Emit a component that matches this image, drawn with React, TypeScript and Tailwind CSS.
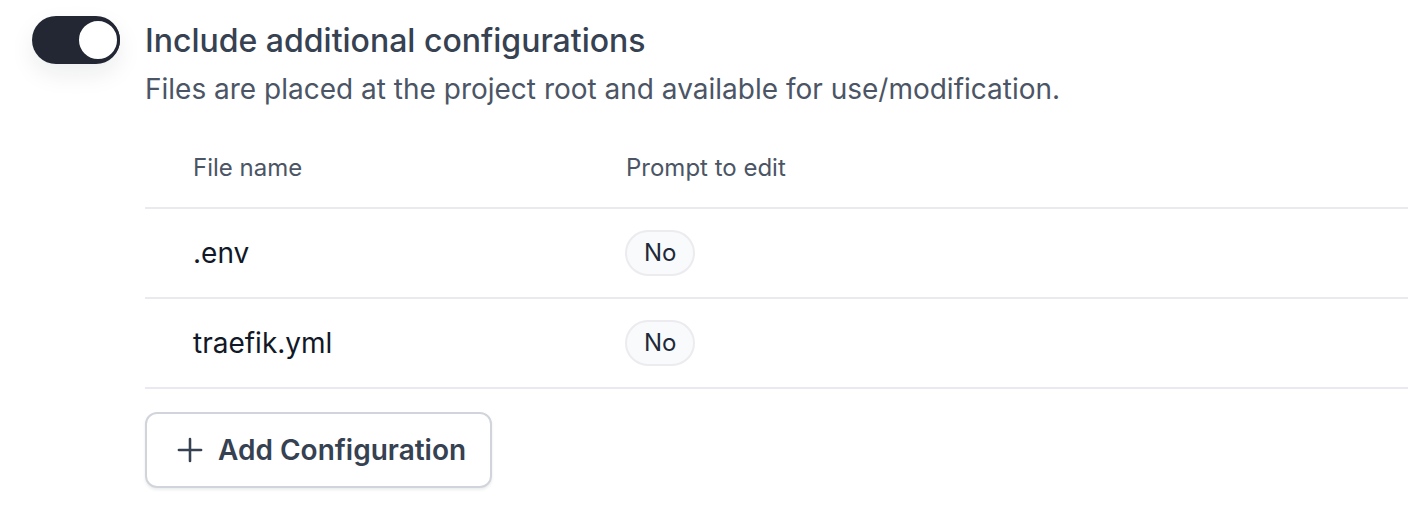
import React from 'react';

type ConfigRow = { name: string; prompt: boolean };

const rows: ConfigRow[] = [
  { name: '.env', prompt: false },
  { name: 'traefik.yml', prompt: false },
];

function Toggle({ on }: { on: boolean }) {
  return (
    <button
      type="button"
      className={
        on
          ? 'relative flex h-[48px] w-[88px] flex-none items-center justify-end rounded-full bg-[#222733] shadow-[0_10px_24px_rgba(15,23,42,0.08)]'
          : 'relative flex h-[48px] w-[88px] flex-none items-center justify-start rounded-full bg-[#e5e7eb]'
      }
    >
      <span className="h-[44px] w-[44px] rounded-full border-[3px] border-[#222733] bg-white" />
    </button>
  );
}

function PlusIcon() {
  return (
    <svg width="28" height="28" viewBox="0 0 24 24" fill="none" stroke="currentColor" strokeWidth="2.2" strokeLinecap="round">
      <path d="M12 2.5v19" />
      <path d="M2.5 12h19" />
    </svg>
  );
}

export default function App() {
  return (
    <div className="min-h-[512px] bg-white font-['Inter',sans-serif]">
      <div className="flex items-start gap-[25px] pl-[32px] pr-[19px] pt-[16px]">
        <Toggle on />

        <div className="flex-1">
          <div className="text-[32px] leading-[50px] font-medium text-[#364152]">
            Include additional configurations
          </div>
          <div className="text-[28px] leading-[46px] text-[#4b5565]">
            Files are placed at the project root and available for use/modification.
          </div>

          {/* Configurations table */}
          <div className="mt-[12px]">
            <div className="flex h-[85px] items-center border-b-2 border-[#e9e9f0] pl-[48px] pt-[4px] text-[24px] text-[#4b5565]">
              <div className="w-[433px]">File name</div>
              <div>Prompt to edit</div>
            </div>
            {rows.map((row) => (
              <div
                key={row.name}
                className="flex h-[90px] items-center border-b-2 border-[#e9e9f0] pl-[48px]"
              >
                <div className="w-[432px] text-[28px] text-[#111827]">{row.name}</div>
                <span className="flex h-[46px] items-center rounded-full border-2 border-[#ebebf0] bg-[#f9fafb] px-[17px] text-[24px] text-[#202939]">
                  {row.prompt ? 'Yes' : 'No'}
                </span>
              </div>
            ))}
          </div>

          <button
            type="button"
            className="mt-[23px] flex h-[76px] items-center gap-[14px] rounded-[12px] border-2 border-[#d1d5db] bg-white pl-[29px] pr-[24px] text-[28px] font-semibold text-[#364152] shadow-[0_2px_3px_rgba(16,24,40,0.08)]"
          >
            <PlusIcon />
            Add Configuration
          </button>
        </div>
      </div>
    </div>
  );
}
